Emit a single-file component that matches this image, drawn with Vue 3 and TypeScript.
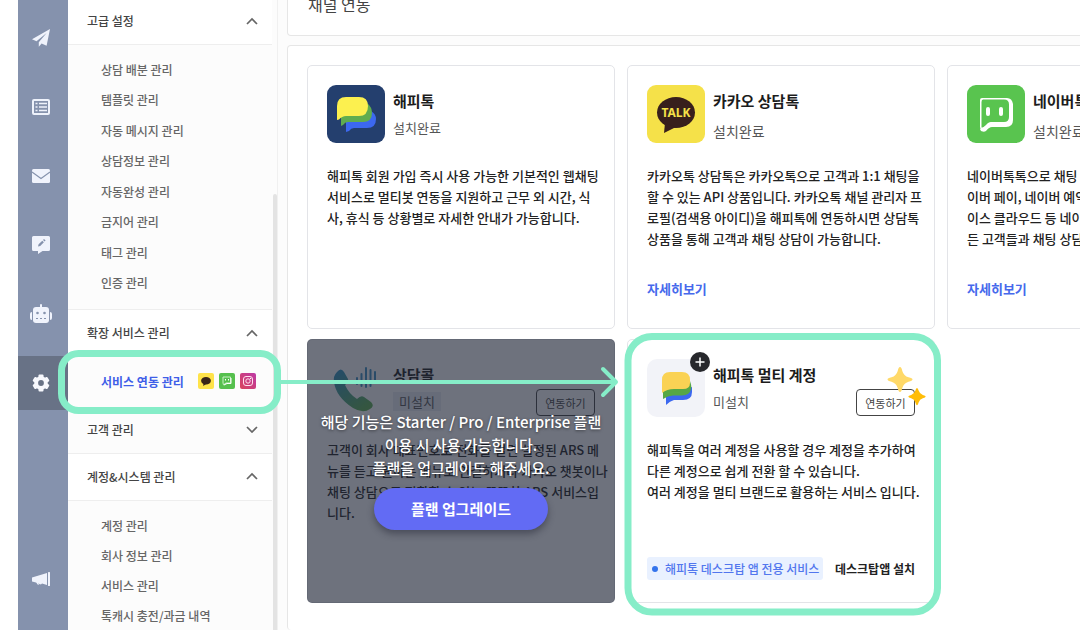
<script setup lang="ts">
interface Section {
  title: string
  open: boolean
  tone: string
  items: string[]
}

const sections: Section[] = [
  {
    title: '고급 설정',
    open: true,
    tone: 'first',
    items: ['상담 배분 관리', '템플릿 관리', '자동 메시지 관리', '상담정보 관리', '자동완성 관리', '금지어 관리', '태그 관리', '인증 관리'],
  },
  { title: '확장 서비스 관리', open: true, tone: 'service', items: [] },
  { title: '고객 관리', open: false, tone: 'closed', items: [] },
  {
    title: '계정&시스템 관리',
    open: true,
    tone: 'last',
    items: ['계정 관리', '회사 정보 관리', '서비스 관리', '톡캐시 충전/과금 내역'],
  },
]
</script>

<template>
  <div class="shell">
    <nav class="rail" aria-label="주 메뉴">
      <a href="#" class="rail-item" aria-label="보내기">
        <svg width="20" height="20" viewBox="0 0 20 20"><path d="M19 1 1 11.3l4.5 1.9L15.6 5 7.8 14.2v4.6l2.8-3.2 5 2.2z" fill="#f0f3fc" /></svg>
      </a>
      <a href="#" class="rail-item" aria-label="목록">
        <svg width="20" height="20" viewBox="0 0 20 20" fill="none" stroke="#eef2fb">
          <rect x="2" y="3" width="16" height="14" rx="1" stroke-width="2" />
          <path d="M4.500 6.500h2M8 6.500h8M4.500 10h2M8 10h8M4.500 13.500h2M8 13.500h8" stroke-width="1.600" />
        </svg>
      </a>
      <a href="#" class="rail-item" aria-label="메일">
        <svg width="20" height="20" viewBox="0 0 20 20"><rect x="1" y="3" width="18" height="14" rx="1.500" fill="#f0f3fc" /><path d="m1 6 9 6.500L19 6" fill="none" stroke="#8592ad" stroke-width="1.100" /></svg>
      </a>
      <a href="#" class="rail-item" aria-label="메모">
        <svg width="20" height="20" viewBox="0 0 20 20"><path d="M2.500 1h15A1.500 1.500 0 0 1 19 2.500v12a1.500 1.500 0 0 1-1.500 1.500h-6L7 19v-3H2.500A1.500 1.500 0 0 1 1 14.500v-12A1.500 1.500 0 0 1 2.500 1z" fill="#f0f3fc" /><path d="m7 11.500.6-2.200 3.700-3.600 1.600 1.600-3.700 3.600zM12 5l1-1 1.600 1.600-1 1z" fill="#8592ad" /></svg>
      </a>
      <a href="#" class="rail-item" aria-label="챗봇">
        <svg width="24" height="20" viewBox="0 0 24 20"><g fill="#f0f3fc"><rect x="11" y="0" width="2" height="4" rx="1" /><rect x="4" y="3" width="16" height="16" rx="3" /><path d="M3 8v8a2 2 0 0 1-2-2v-4a2 2 0 0 1 2-2zM21 8v8a2 2 0 0 0 2-2v-4a2 2 0 0 0-2-2z" /></g><g fill="#8592ad"><circle cx="8.500" cy="9" r="1.300" /><circle cx="15.500" cy="9" r="1.300" /><path d="M7 14h2v1H7zM11 14h2v1h-2zM15 14h2v1h-2z" /></g></svg>
      </a>
      <a href="#" class="rail-item current" aria-label="설정" aria-current="page">
        <svg width="20" height="20" viewBox="0 0 20 20"><g fill="#f7f8fd"><circle cx="10" cy="10" r="6.800" /><rect x="7.500" y="1.500" width="5" height="17" rx="1" /><rect x="7.500" y="1.500" width="5" height="17" rx="1" transform="rotate(60 10 10)" /><rect x="7.500" y="1.500" width="5" height="17" rx="1" transform="rotate(120 10 10)" /></g><circle cx="10" cy="10" r="2.900" fill="#687286" /></svg>
      </a>
      <a href="#" class="rail-item bottom" aria-label="공지">
        <svg width="20" height="20" viewBox="0 0 20 20"><path d="M1 7.500 16 3v12l-5-1.500A3 3 0 0 1 5.600 13L5 12.500l-4-1z" fill="#f0f3fc" /><path d="M7 13.600a2 2 0 0 0 3 .8l-3-1z" fill="#8592ad" /><rect x="17" y="2" width="2" height="14" rx=".5" fill="#f0f3fc" /></svg>
      </a>
    </nav>

    <aside class="sidebar">
      <section v-for="section in sections" :key="section.title" class="section" :class="section.tone">
        <button type="button" class="section-head" :aria-expanded="section.open">
          <span>{{ section.title }}</span>
          <svg width="12" height="8" viewBox="0 0 12 8" fill="none" stroke="#666" stroke-width="1.700">
            <path :d="section.open ? 'M1 7 6 2 11 7' : 'M1 2 6 7 11 2'" />
          </svg>
        </button>
        <a v-if="section.tone === 'service'" href="#" class="service-link">
          <span>서비스 연동 관리</span>
          <span class="service-icons">
            <svg width="16" height="16" viewBox="0 0 16 16"><rect width="16" height="16" rx="2" fill="#ffe34a" /><ellipse cx="8" cy="7.700" rx="4.900" ry="3.800" fill="#3a2518" /><path d="m5.500 10-.3 3 3-2z" fill="#3a2518" /></svg>
            <svg width="16" height="16" viewBox="0 0 16 16"><rect width="16" height="16" rx="2" fill="#56c04e" /><path d="M4 4h7.500v6H7l-2.500 1.800L4 10z" fill="none" stroke="#c9f0c5" /><path d="M12 5v5.500H8L5 12M6.500 6v1.500M9.500 6v1.500" fill="none" stroke="#fff" /></svg>
            <svg width="16" height="16" viewBox="0 0 16 16"><defs><linearGradient id="insta" x1="0" y1="1" x2="1" y2="0"><stop offset="0" stop-color="#d9445c" /><stop offset="1" stop-color="#bd3aa6" /></linearGradient></defs><rect width="16" height="16" rx="2" fill="url(#insta)" /><rect x="3.500" y="3.500" width="9" height="9" rx="2.500" fill="none" stroke="#ffe1ee" /><circle cx="8" cy="8" r="2.200" fill="none" stroke="#ffe1ee" /><circle cx="10.600" cy="5.400" r=".7" fill="#fff" /></svg>
          </span>
        </a>
        <ul v-if="section.items.length" class="menu">
          <li v-for="item in section.items" :key="item"><a href="#">{{ item }}</a></li>
        </ul>
      </section>
      <div class="scroll-thumb"></div>
    </aside>

    <main class="workspace">
      <header class="panel title-panel"><h1>채널 연동</h1></header>

      <div class="panel cards">
        <article class="card">
          <div class="card-head">
            <svg class="logo" width="58" height="58" viewBox="0 0 58 58">
              <rect width="58" height="58" rx="9" fill="#243f6e" />
              <path d="M19 47V34L44 26q5 3 5 8 0 9-9 9H27q-3 0-5 3z" fill="#3c68f0" />
              <path d="M14 41V27L40 18q5 4 5 10 0 9-9 9H21q-3 0-5 3z" fill="#60ad4f" />
              <path d="M10 35V21q0-9 9-9h13q9 0 9 9 0 10-9 10H19q-4 0-7 3.500z" fill="#fcf04f" />
            </svg>
            <div class="names"><h2>해피톡</h2><p>설치완료</p></div>
          </div>
          <p class="desc">해피톡 회원 가입 즉시 사용 가능한 기본적인 웹채팅<br />서비스로 멀티봇 연동을 지원하고 근무 외 시간, 식<br />사, 휴식 등 상황별로 자세한 안내가 가능합니다.</p>
        </article>

        <article class="card">
          <div class="card-head">
            <svg class="logo" width="58" height="58" viewBox="0 0 58 58">
              <rect width="58" height="58" rx="9" fill="#f5e149" />
              <ellipse cx="29" cy="27.500" rx="19" ry="15.500" fill="#381f1c" />
              <path d="m18 38-1 10 12-6z" fill="#381f1c" />
              <text x="29" y="32" text-anchor="middle" font-family="Noto Sans, sans-serif" font-weight="700" font-size="12" fill="#f5e149">TALK</text>
            </svg>
            <div class="names roomy"><h2>카카오 상담톡</h2><p>설치완료</p></div>
          </div>
          <p class="desc">카카오톡 상담톡은 카카오톡으로 고객과 1:1 채팅을<br />할 수 있는 API 상품입니다. 카카오톡 채널 관리자 프<br />로필(검색용 아이디)을 해피톡에 연동하시면 상담톡<br />상품을 통해 고객과 채팅 상담이 가능합니다.</p>
          <a href="#" class="more">자세히보기</a>
        </article>

        <article class="card">
          <div class="card-head">
            <svg class="logo" width="58" height="58" viewBox="0 0 58 58">
              <rect width="58" height="58" rx="9" fill="#59c44f" />
              <path d="M15 13h25q5 0 6 6v16q0 7-7 7H25q-3 0-6 4-3 2-5-1l-1-3V15q0-2 2-2z" fill="#fff" />
              <path d="M16 14.500h21q5 0 5 5V32q0 5-5 5H25q-3 0-6 4-2 2-4.500 1.500V17q0-2.500 1.500-2.500z" fill="#59c44f" />
              <path d="M13 44q3-1 6-4 2-3 6-3h16l1 4H25q-3 1-6 4-3 2-5 1z" fill="#fff" />
              <rect x="19" y="22" width="4" height="9" rx="2" fill="#fff" /><rect x="32" y="22" width="4" height="9" rx="2" fill="#fff" />
            </svg>
            <div class="names roomy"><h2>네이버톡톡</h2><p>설치완료</p></div>
          </div>
          <p class="desc">네이버톡톡으로 채팅 상담을 할 수 있습니다. 네<br />이버 페이, 네이버 예약, 네이버 쇼핑, 네이버 플레<br />이스 클라우드 등 네이버 서비스를 이용하는 모<br />든 고객들과 채팅 상담이 가능합니다.</p>
          <a href="#" class="more">자세히보기</a>
        </article>

        <article class="card locked">
          <div class="card-head">
            <svg class="logo" width="58" height="58" viewBox="0 0 58 58">
              <defs><linearGradient id="phone" x1="0" y1="0" x2="0.7" y2="1"><stop offset="0" stop-color="#2e90c8" /><stop offset="1" stop-color="#5cb050" /></linearGradient></defs>
              <path d="M10 13q4-5 7 0l4 7q1 3-3 6 4 9 12 14 4-4 7-2l7 5q4 4-1 7-7 5-17-1Q9 38 7 23q-1-6 3-10z" fill="url(#phone)" />
              <path d="M30 19v6M34.500 15v12M39 9v19M43.500 11v16M48 13v9" stroke="#3e91c4" stroke-width="2" stroke-linecap="round" />
            </svg>
            <div class="names"><h2>상담콜</h2><p><span class="state">미설치</span></p></div>
            <button type="button" class="connect">연동하기</button>
          </div>
          <p class="desc">고객이 회사 대표번호로 전화를 걸면 설정된 ARS 메<br />뉴를 듣고 원하는 메뉴로 연결하거나 카카오 챗봇이나<br />채팅 상담으로 전환할 수 있는 똑똑한 ARS 서비스입<br />니다.</p>
          <div class="veil">
            <p>해당 기능은 Starter / Pro / Enterprise 플랜<br />이용 시 사용 가능합니다.<br />플랜을 업그레이드 해주세요.</p>
            <button type="button">플랜 업그레이드</button>
          </div>
        </article>

        <article class="card">
          <div class="card-head">
            <span class="logo-wrap">
              <svg class="logo" width="58" height="58" viewBox="0 0 58 58">
                <rect width="58" height="58" rx="10" fill="#f2f3f8" />
                <path d="M19 46V36l26-8v5q0 8-9 8h-9q-4 1-8 5z" fill="#3c68f0" />
                <path d="M16 40v-9l27-9q2 6 1 8-1 6-9 6.500h-9q-5 0-10 3.500z" fill="#56a746" />
                <path d="M15 34V21q0-8 8-8h12q8 0 8 8v3q0 6-7 6h-9q-7 0-12 4z" fill="#fad254" />
              </svg>
              <svg class="plus" width="20" height="20" viewBox="0 0 20 20"><circle cx="10" cy="10" r="10" fill="#27282c" /><path d="M10 5.500v9M5.500 10h9" stroke="#fff" stroke-width="1.500" /></svg>
            </span>
            <div class="names"><h2>해피톡 멀티 계정</h2><p>미설치</p></div>
            <span class="connect-wrap">
              <button type="button" class="connect">연동하기</button>
              <svg class="sparkles" width="40" height="40" viewBox="0 0 40 40">
                <path d="M14 1q1.500 0 2.300 4 1.500 5 6.200 6.300 4 1 4 2.200t-4 2.200q-4.700 1.300-6.200 6.300-.8 4-2.300 4t-2.300-4q-1.500-5-6.200-6.300-4-1-4-2.200t4-2.200q4.700-1.300 6.200-6.300 .8-4 2.300-4z" fill="#ffd968" />
                <path d="M31 22q1 0 1.600 2.600 1 3.300 4.200 4.300 2.900.7 2.900 1.700t-2.900 1.700q-3.200 1-4.200 4.300-.6 2.600-1.600 2.600t-1.600-2.600q-1-3.300-4.200-4.300-2.900-.7-2.900-1.700t2.900-1.700q3.200-1 4.200-4.300 .6-2.600 1.600-2.600z" fill="#ffbd08" />
              </svg>
            </span>
          </div>
          <p class="desc">해피톡을 여러 계정을 사용할 경우 계정을 추가하여<br />다른 계정으로 쉽게 전환 할 수 있습니다.<br />여러 계정을 멀티 브랜드로 활용하는 서비스 입니다.</p>
          <div class="desktop">
            <span class="badge">해피톡 데스크탑 앱 전용 서비스</span>
            <a href="#">데스크탑앱 설치</a>
          </div>
        </article>
      </div>
    </main>

    <svg class="guide" width="960" height="630" viewBox="0 0 960 630" fill="none" stroke="#86edc8" aria-hidden="true">
      <rect x="61.500" y="353.500" width="216" height="57" rx="17" stroke-width="7" />
      <rect x="628" y="336.500" width="309.500" height="275.500" rx="24" stroke-width="7" />
      <path d="M280 382H615" stroke-width="4" />
      <path d="M603 369 616 382 603 395" stroke-width="4" stroke-linecap="round" stroke-linejoin="round" />
    </svg>
  </div>
</template>

<style>
body {
  margin: 0;
  background: #fff;
}
</style>

<style scoped>
.shell {
  position: relative;
  display: flex;
  height: 100vh;
  padding-left: 18px;
  box-sizing: border-box;
  overflow: hidden;
  background: #fff;
  color: #222;
  font-family: "Noto Sans CJK KR", "Noto Sans", sans-serif;
  font-size: 13px;
  font-weight: 500;
}
.shell *,
.shell *::before {
  box-sizing: border-box;
}
h1,
h2,
p,
ul {
  margin: 0;
  padding: 0;
}
a {
  color: inherit;
  text-decoration: none;
}
button {
  font: inherit;
  color: inherit;
  cursor: pointer;
}
svg {
  display: block;
  flex: none;
}
.rail {
  flex: none;
  display: flex;
  flex-direction: column;
  gap: 15px;
  width: 50px;
  padding-top: 11px;
  padding-bottom: 23px;
  background: #8592ad;
}
.rail-item {
  flex: none;
  display: grid;
  place-items: center;
  width: 46px;
  height: 54px;
}
.rail-item.current {
  width: 50px;
  padding-right: 4px;
  background: #687286;
}
.rail-item.bottom {
  margin-top: auto;
}
.sidebar {
  position: relative;
  flex: none;
  width: 210px;
  padding-right: 5px;
  border-right: 1px solid #f0f0f0;
  background: #fcfcfc;
  color: #444;
  font-size: 12px;
}
.section-head {
  display: flex;
  align-items: center;
  justify-content: space-between;
  width: 100%;
  height: 47px;
  padding: 0 14px 2px 19px;
  border: 0;
  border-bottom: 1px solid #eee;
  background: #fff;
}
.first .section-head {
  height: 45px;
  padding-bottom: 3px;
}
.closed .section-head {
  background: #fcfcfc;
}
.service .section-head {
  border-bottom: 0;
}
.menu {
  display: grid;
  grid-auto-rows: 1fr;
  height: 265px;
  padding: 9px 0 11px;
  border-bottom: 1px solid #eee;
  list-style: none;
  color: #666;
}
.last .menu {
  height: 142px;
}
.menu li {
  display: flex;
  align-items: center;
  padding-left: 33px;
}
.service-link {
  display: flex;
  align-items: center;
  gap: 14px;
  height: 50px;
  padding: 0 0 2px 33px;
  color: #3f5ee8;
  font-weight: 700;
}
.service-icons {
  display: flex;
  gap: 5px;
}
.scroll-thumb {
  position: absolute;
  top: 194px;
  right: 0;
  bottom: 0;
  width: 4px;
  border-radius: 4px 4px 0 0;
  background: #e3e3e3;
}
.workspace {
  flex: 1 0 0;
  min-width: 997px;
  display: flex;
  flex-direction: column;
  gap: 9px;
  padding-left: 9px;
  background: #fcfcfc;
}
.panel {
  border: 1px solid #e6e6e6;
  border-radius: 4px;
  background: #fff;
}
.title-panel {
  height: 36px;
  padding-left: 20px;
  border-top: 0;
  border-radius: 0 0 4px 4px;
}
.title-panel h1 {
  margin-top: -7px;
  color: #444;
  font-size: 16px;
  font-weight: 400;
  line-height: 22px;
}
.cards {
  flex: 1;
  display: grid;
  grid-template-columns: repeat(3, minmax(308px, 1fr));
  grid-auto-rows: 264px;
  gap: 10px 12px;
  padding: 19px;
  border-bottom: 0;
}
.card {
  position: relative;
  display: flex;
  flex-direction: column;
  min-width: 0;
  padding: 19px;
  border: 1px solid #e3e4e8;
  border-radius: 5px;
  background: #fff;
  white-space: nowrap;
}
.card-head {
  display: flex;
  gap: 8px;
  height: 58px;
}
.names h2 {
  margin-top: 4px;
  color: #1c1c1c;
  font-size: 15px;
  font-weight: 700;
  line-height: 24px;
}
.names p {
  margin-top: 4px;
  color: #555;
  font-weight: 400;
  line-height: 22px;
}
.names.roomy p {
  margin-top: 7px;
  font-size: 14px;
}
.state {
  padding: 0 6px;
  background: #eceef3;
}
.desc {
  margin-top: 22px;
  line-height: 21px;
}
.more {
  margin-top: 29px;
  color: #4669ec;
  font-weight: 700;
  line-height: 21px;
}
.connect {
  align-self: flex-start;
  width: 59px;
  height: 27px;
  margin-top: 30px;
  margin-left: auto;
  padding: 0;
  border: 1px solid #444;
  border-radius: 4px;
  background: #fff;
  color: #444;
  font-size: 11px;
  font-weight: 400;
}
.connect-wrap {
  position: relative;
  display: flex;
  margin-left: auto;
}
.sparkles {
  position: absolute;
  right: -11px;
  top: 7px;
}
.logo-wrap {
  position: relative;
}
.plus {
  position: absolute;
  top: -7px;
  right: -5px;
}
.veil {
  position: absolute;
  inset: -1px;
  display: flex;
  flex-direction: column;
  align-items: center;
  padding-top: 71px;
  border-radius: 5px;
  background: rgba(33, 39, 55, 0.65);
  color: #fff;
  font-size: 15px;
  line-height: 23px;
  text-align: center;
  text-shadow: 0 1px 3px rgba(0, 0, 0, 0.5);
}
.veil button {
  width: 174px;
  height: 42px;
  margin-top: 9px;
  padding: 0 0 2px;
  border: 0;
  border-radius: 21px;
  background: #626bf4;
  font-weight: 700;
  box-shadow: 0 4px 7px rgba(30, 34, 48, 0.45);
}
.desktop {
  display: flex;
  align-items: center;
  justify-content: space-between;
  margin-top: 55px;
  font-size: 12px;
  font-weight: 700;
}
.badge {
  display: flex;
  align-items: center;
  gap: 7px;
  height: 23px;
  padding: 0 4px 0 5px;
  border-radius: 3px;
  background: #e9f1ff;
  color: #5277ee;
  font-weight: 500;
}
.badge::before {
  content: "";
  width: 6px;
  height: 6px;
  border-radius: 50%;
  background: #3474ec;
}
.guide {
  position: absolute;
  top: 0;
  left: 0;
  pointer-events: none;
}
</style>
